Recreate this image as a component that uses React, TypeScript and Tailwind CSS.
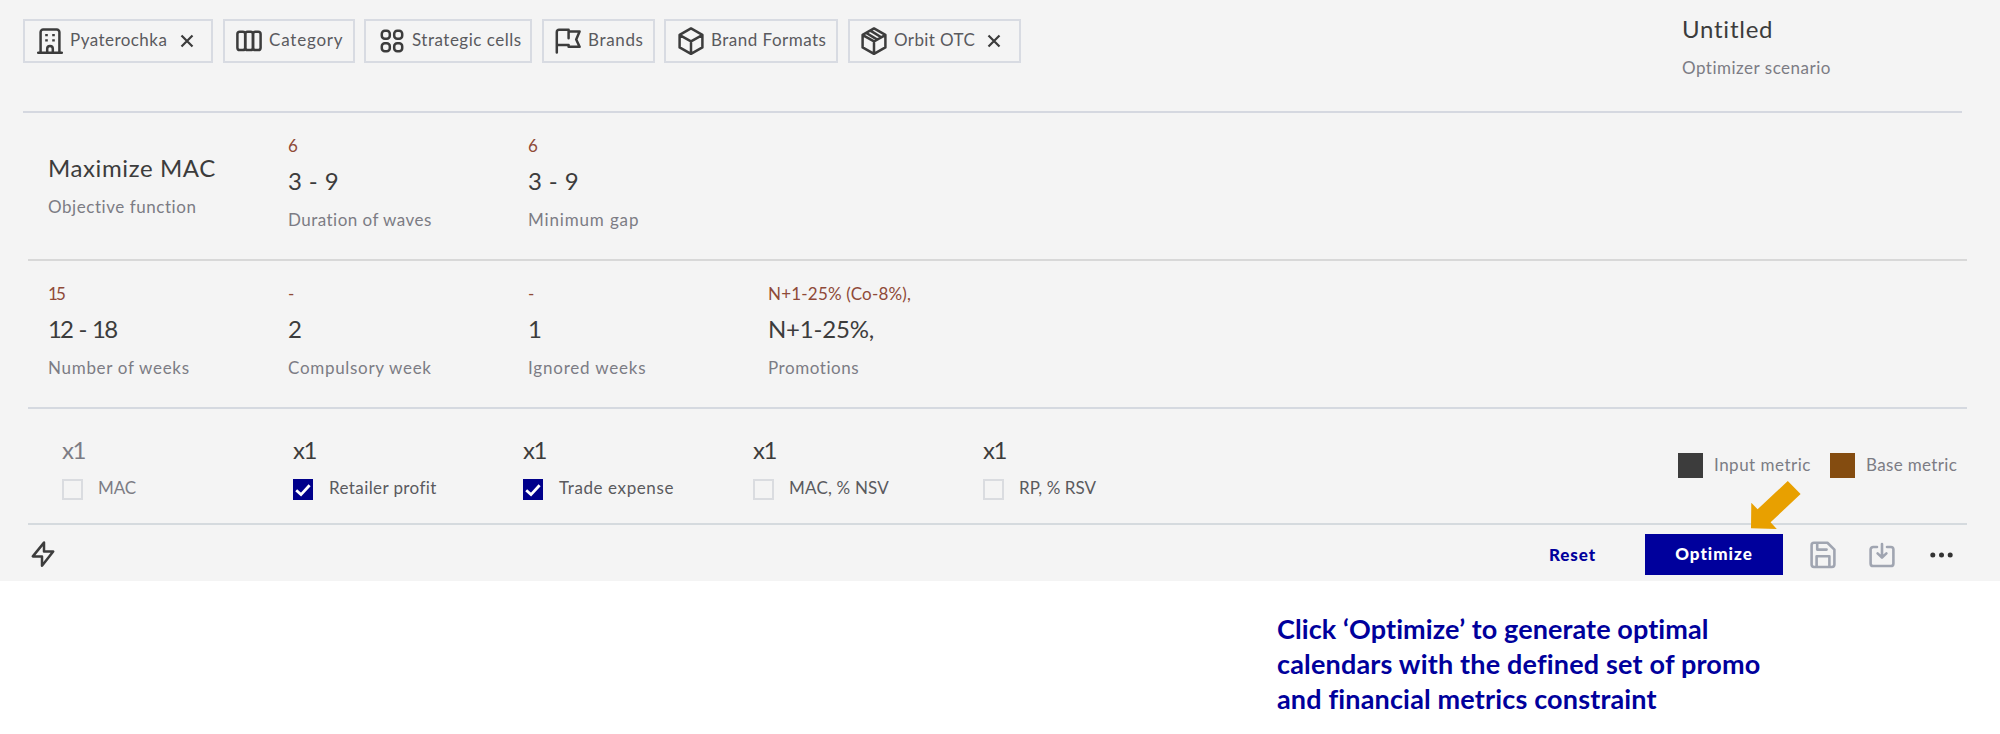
import type { ReactNode } from 'react';

type IconProps = { children: ReactNode };

function Icon({ children }: IconProps) {
  return (
    <svg
      viewBox="0 0 26 28"
      fill="none"
      stroke="currentColor"
      strokeWidth="2.5"
      strokeLinecap="round"
      strokeLinejoin="round"
      className="h-7 w-[26px] shrink-0 text-[#3c3c3c]"
    >
      {children}
    </svg>
  );
}

const BuildingIcon = () => (
  <Icon>
    <path d="M1.2 25.8h23.6M3.6 25.4V5.2a2.6 2.6 0 0 1 2.6-2.6h13.6a2.6 2.6 0 0 1 2.6 2.6v20.2M10.2 25.4v-3.6a2.8 2.8 0 0 1 5.6 0v3.6" />
    <path strokeWidth="2.2" strokeLinecap="butt" d="M8.2 8.2h2.6M15.2 8.2h2.6M8.2 13.4h2.6M15.2 13.4h2.6" />
  </Icon>
);

const ColumnsIcon = () => (
  <Icon>
    <rect x="1.4" y="4.7" width="7.8" height="18.4" rx="2.4" />
    <rect x="9.2" y="4.7" width="7.8" height="18.4" rx="2.4" />
    <rect x="17" y="4.7" width="7.6" height="18.4" rx="2.4" />
  </Icon>
);

const CellsIcon = () => (
  <Icon>
    <rect x="2.8" y="3.7" width="8" height="8" rx="3" />
    <rect x="15.2" y="3.7" width="8" height="8" rx="3" />
    <rect x="2.8" y="16.3" width="8" height="8" rx="3" />
    <rect x="15.2" y="16.3" width="8" height="8" rx="3" />
  </Icon>
);

const FlagIcon = () => (
  <Icon>
    <path d="M1.8 25.6V5a2.2 2.2 0 0 1 2.2-2.2h9.6V4.6H24.6l-3.4 7.8 3.4 7.4H13.6v-1.9H1.8M13.6 3.4v7.8" />
  </Icon>
);

const BoxIcon = () => (
  <Icon>
    <path d="M13 1.4 24.4 7.8v12.6L13 26.8 1.6 20.4V7.8ZM1.8 8.2 13 14.4l11.2-6.2M13 14.6v12" />
  </Icon>
);

const PackageIcon = () => (
  <Icon>
    <path d="M13 1.4 24.4 7.8v12.6L13 26.8 1.6 20.4V7.8ZM1.8 8.2 13 14.4l11.2-6.2M13 14.6v12M9.4 3.6l10 6.2M5.4 6l10.4 6.4" />
  </Icon>
);

function CloseIcon() {
  return (
    <svg viewBox="0 0 14 14" className="h-[14px] w-[14px] shrink-0" stroke="#3c3c3c" strokeWidth="2.2">
      <path d="M1.5 1.5l11 11M12.5 1.5l-11 11" />
    </svg>
  );
}

function Chip({ icon, label, box, text, close }: { icon: ReactNode; label: string; box: string; text: string; close?: boolean }) {
  return (
    <div className={`flex h-[44px] shrink-0 items-center border-2 border-[#d8dbe2] ${box}`}>
      {icon}
      <span className={`-mt-[3px] ml-[7px] whitespace-nowrap text-[17px] leading-6 text-[#5a5a5e] ${text}`}>{label}</span>
      {close && (
        <span className="ml-auto flex">
          <CloseIcon />
        </span>
      )}
    </div>
  );
}

type MetricProps = { base?: string; value: string; label: string; valueTrack?: string; baseTrack?: string; track: string };

function Metric({ base, value, label, valueTrack = '', baseTrack = '', track }: MetricProps) {
  return (
    <div className="flex w-60 shrink-0 flex-col whitespace-nowrap">
      {base !== undefined && <div className={`mb-[7px] h-6 text-[17px] leading-6 text-[#8f4a38] ${baseTrack}`}>{base}</div>}
      <div className={`text-[24px] leading-8 text-[#3c3c3c] ${valueTrack}`}>{value}</div>
      <div className={`mt-[11px] text-[17px] leading-6 text-[#7c7c84] ${track}`}>{label}</div>
    </div>
  );
}

function Check({ label, checked, muted, track }: { label: string; checked?: boolean; muted?: boolean; track: string }) {
  return (
    <div className="w-[230px] shrink-0 whitespace-nowrap">
      <div className={`text-[24px] leading-8 tracking-[-1.5px] ${muted ? 'text-[#7c7c84]' : 'text-[#3c3c3c]'}`}>x1</div>
      <div className="mt-[10px] flex items-start">
        {checked ? (
          <span className="mt-[3px] flex h-[21px] w-[20px] items-center justify-center bg-[#00008b]">
            <svg viewBox="0 0 16 16" className="h-4 w-4" fill="none" stroke="#fff" strokeWidth="2.8">
              <path d="M1.2 8.2l4.8 4.4L14.6 3.2" />
            </svg>
          </span>
        ) : (
          <span className="mt-[3px] h-[21px] w-[21px] border-2 border-[#dadce0]" />
        )}
        <span className={`text-[17px] leading-6 ${checked ? 'ml-4' : 'ml-[15px]'} ${muted ? 'text-[#7c7c84]' : 'text-[#5a5a5e]'} ${track}`}>{label}</span>
      </div>
    </div>
  );
}

export default function App() {
  return (
    <div className="h-[734px] w-[2000px] overflow-hidden bg-white font-['Lato',sans-serif]">
      <main className="flex h-[581px] flex-col bg-[#f4f4f4]">
        <header className="ml-[23px] flex h-[113px] w-[1939px] items-start justify-between border-b-2 border-[#d5d8e0]">
          <div className="mt-[19px] flex">
            <Chip icon={<BuildingIcon />} label="Pyaterochka" box="w-[190px] pl-[12px] pr-[17px]" text="tracking-[0.45px]" close />
            <Chip icon={<ColumnsIcon />} label="Category" box="ml-[10px] w-[132px] pl-[11px]" text="tracking-[0.8px]" />
            <Chip icon={<CellsIcon />} label="Strategic cells" box="ml-[9px] w-[168px] pl-[13px]" text="tracking-[0.5px]" />
            <Chip icon={<FlagIcon />} label="Brands" box="ml-[10px] w-[113px] pl-[11px]" text="tracking-[0.65px]" />
            <Chip icon={<BoxIcon />} label="Brand Formats" box="ml-[9px] w-[174px] pl-[12px]" text="tracking-[0.48px]" />
            <Chip icon={<PackageIcon />} label="Orbit OTC" box="ml-[10px] w-[173px] pl-[11px] pr-[18px]" text="tracking-[0.4px]" close />
          </div>
          <div className="mt-[13px] w-[280px] whitespace-nowrap">
            <div className="text-[24px] leading-8 tracking-[0.75px] text-[#3c3c3c]">Untitled</div>
            <div className="mt-[11px] text-[17px] leading-6 tracking-[0.5px] text-[#7c7c84]">Optimizer scenario</div>
          </div>
        </header>

        <section className="ml-7 flex h-[148px] w-[1939px] border-b-2 border-[#d8d8d8] pl-5 pt-[21px]">
          <div className="pt-[18px]">
            <Metric value="Maximize MAC" valueTrack="tracking-[0.6px]" label="Objective function" track="tracking-[0.55px]" />
          </div>
          <Metric base="6" value="3 - 9" valueTrack="tracking-[0.4px]" label="Duration of waves" track="tracking-[0.47px]" />
          <Metric base="6" value="3 - 9" valueTrack="tracking-[0.4px]" label="Minimum gap" track="tracking-[0.85px]" />
        </section>

        <section className="ml-7 flex h-[148px] w-[1939px] border-b-2 border-[#d5d9e0] pl-5 pt-[21px]">
          <Metric base="15" baseTrack="tracking-[-1.8px]" value="12 - 18" valueTrack="tracking-[-1.8px] [word-spacing:2px]" label="Number of weeks" track="tracking-[0.7px]" />
          <Metric base="-" value="2" label="Compulsory week" track="tracking-[0.7px]" />
          <Metric base="-" value="1" label="Ignored weeks" track="tracking-[0.8px]" />
          <Metric base="N+1-25% (Co-8%)," baseTrack="tracking-[0.2px]" value="N+1-25%," valueTrack="tracking-[-0.2px]" label="Promotions" track="tracking-[0.55px]" />
        </section>

        <section className="ml-7 flex h-[116px] w-[1939px] border-b-2 border-[#d5dade]">
          <div className="flex pl-[34px] pt-[25px]">
            <Check label="MAC" muted track="tracking-[-0.1px]" />
            <div className="w-px" />
            <Check label="Retailer profit" checked track="tracking-[0.4px]" />
            <Check label="Trade expense" checked track="tracking-[0.6px]" />
            <Check label="MAC, % NSV" track="tracking-[0.2px]" />
            <Check label="RP, % RSV" track="tracking-[0.05px]" />
          </div>
          <div className="ml-auto mt-[44px] flex h-[25px] w-[289px] items-center whitespace-nowrap text-[17px] leading-6 text-[#7c7c84]">
            <span className="h-[25px] w-[25px] shrink-0 bg-[#3c3c3c]" />
            <span className="-mt-[2px] ml-[11px] w-[116px] shrink-0 tracking-[0.5px]">Input metric</span>
            <span className="h-[25px] w-[25px] shrink-0 bg-[#844c10]" />
            <span className="-mt-[2px] ml-[11px] tracking-[0.35px]">Base metric</span>
          </div>
        </section>

        <footer className="flex flex-1 items-start">
          <svg viewBox="0 0 26 28" className="ml-[30px] mt-[15px] h-7 w-[26px]" fill="none" stroke="#3c3c3c" strokeWidth="2.5" strokeLinejoin="round">
            <path d="M14 2.6 2.8 16.4H12v9.4l11.2-14.4H14Z" />
          </svg>
          <button className="ml-auto mt-[18px] text-[17px] font-black leading-6 tracking-[0.9px] text-[#00009c]">Reset</button>
          <button className="relative ml-[49px] mt-[9px] h-[41px] w-[138px] bg-[#00009c] pb-[1px] text-[17px] font-black leading-6 tracking-[1px] text-white">
            Optimize
            <svg viewBox="0 0 50 49" className="pointer-events-none absolute left-[106px] top-[-53px] h-[49px] w-[50px]">
              <path d="M36.8 0 49.6 13 19.6 41.3 25.8 47.9 0 47.2 .3 21.8 6.6 28.2Z" fill="#e8a000" />
            </svg>
          </button>
          <svg viewBox="0 0 26 28" className="ml-[27px] mt-[16px] h-7 w-[26px]" fill="none" stroke="#a0a5b1" strokeWidth="2.6" strokeLinejoin="round" strokeLinecap="round">
            <path d="M4 1.8h13.4L24.4 8.6v15a2.4 2.4 0 0 1-2.4 2.4H4a2.4 2.4 0 0 1-2.4-2.4V4.2A2.4 2.4 0 0 1 4 1.8Z" />
            <path d="M7.2 2.2V8.6H16.6M6.6 25.6V15.2h12.8v10.4" />
          </svg>
          <svg viewBox="0 0 26 26" className="ml-[33px] mt-[17px] h-[26px] w-[26px]" fill="none" stroke="#a0a5b1" strokeWidth="2.6" strokeLinejoin="round" strokeLinecap="round">
            <path d="M8 5H4.2a2.6 2.6 0 0 0-2.6 2.6v13.8A2.6 2.6 0 0 0 4.2 24h17.6a2.6 2.6 0 0 0 2.6-2.6V7.6A2.6 2.6 0 0 0 21.8 5H18M13 2v13M8.6 11.4 13 15.6l4.4-4.2" />
          </svg>
          <svg viewBox="0 0 24 6" className="ml-[35px] mr-[46px] mt-[27px] h-[6px] w-6" fill="#333">
            <circle cx="2.8" cy="3" r="2.5" />
            <circle cx="11.5" cy="3" r="2.5" />
            <circle cx="20.2" cy="3" r="2.5" />
          </svg>
        </footer>
      </main>

      <p className="ml-[1277px] mt-[30px] whitespace-nowrap text-[27px] font-bold leading-[35px] text-[#00009c]">
        <span className="block tracking-[0.1px]">Click ‘Optimize’ to generate optimal</span>
        <span className="block tracking-[0.18px]">calendars with the defined set of promo</span>
        <span className="block tracking-[0.16px]">and financial metrics constraint</span>
      </p>
    </div>
  );
}
